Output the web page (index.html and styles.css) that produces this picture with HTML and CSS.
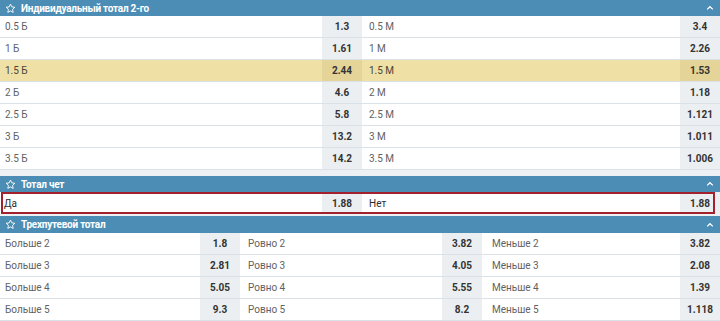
FILE: index.html
```html
<!DOCTYPE html>
<html lang="ru">
<head>
<meta charset="utf-8">
<link rel="stylesheet" href="styles.css">
</head>
<body>
<div class="page">
  <section class="market">
    <div class="head">
      <svg class="star" viewBox="0 0 12 12"><path d="M6 1.2l1.45 3.05 3.3.4-2.45 2.3.63 3.3L6 8.65 3.07 10.25l.63-3.3L1.25 4.65l3.3-.4z" fill="none" stroke="#fff" stroke-width="1" stroke-linejoin="round"/></svg>
      <span class="title">Индивидуальный тотал 2-го</span>
      <svg class="chev" viewBox="0 0 8 6"><path d="M1.2 4.4L4 1.7l2.8 2.7" fill="none" stroke="#fff" stroke-width="1.3"/></svg>
    </div>
    <div class="grid two">
      <div class="cell"><span class="lbl">0.5 Б</span><span class="odd">1.3</span></div>
      <div class="cell"><span class="lbl">0.5 М</span><span class="odd">3.4</span></div>
      <div class="cell"><span class="lbl">1 Б</span><span class="odd">1.61</span></div>
      <div class="cell"><span class="lbl">1 М</span><span class="odd">2.26</span></div>
      <div class="cell hl"><span class="lbl">1.5 Б</span><span class="odd">2.44</span></div>
      <div class="cell hl"><span class="lbl">1.5 М</span><span class="odd">1.53</span></div>
      <div class="cell"><span class="lbl">2 Б</span><span class="odd">4.6</span></div>
      <div class="cell"><span class="lbl">2 М</span><span class="odd">1.18</span></div>
      <div class="cell"><span class="lbl">2.5 Б</span><span class="odd">5.8</span></div>
      <div class="cell"><span class="lbl">2.5 М</span><span class="odd">1.121</span></div>
      <div class="cell"><span class="lbl">3 Б</span><span class="odd">13.2</span></div>
      <div class="cell"><span class="lbl">3 М</span><span class="odd">1.011</span></div>
      <div class="cell"><span class="lbl">3.5 Б</span><span class="odd">14.2</span></div>
      <div class="cell"><span class="lbl">3.5 М</span><span class="odd">1.006</span></div>
    </div>
  </section>

  <section class="market market-mid">
    <div class="head">
      <svg class="star" viewBox="0 0 12 12"><path d="M6 1.2l1.45 3.05 3.3.4-2.45 2.3.63 3.3L6 8.65 3.07 10.25l.63-3.3L1.25 4.65l3.3-.4z" fill="none" stroke="#fff" stroke-width="1" stroke-linejoin="round"/></svg>
      <span class="title">Тотал чет</span>
      <svg class="chev" viewBox="0 0 8 6"><path d="M1.2 4.4L4 1.7l2.8 2.7" fill="none" stroke="#fff" stroke-width="1.3"/></svg>
    </div>
    <div class="grid two marked">
      <div class="cell"><span class="lbl dark">Да</span><span class="odd">1.88</span></div>
      <div class="cell"><span class="lbl dark">Нет</span><span class="odd">1.88</span></div>
    </div>
  </section>

  <section class="market market-last">
    <div class="head">
      <svg class="star" viewBox="0 0 12 12"><path d="M6 1.2l1.45 3.05 3.3.4-2.45 2.3.63 3.3L6 8.65 3.07 10.25l.63-3.3L1.25 4.65l3.3-.4z" fill="none" stroke="#fff" stroke-width="1" stroke-linejoin="round"/></svg>
      <span class="title">Трехпутевой тотал</span>
      <svg class="chev" viewBox="0 0 8 6"><path d="M1.2 4.4L4 1.7l2.8 2.7" fill="none" stroke="#fff" stroke-width="1.3"/></svg>
    </div>
    <div class="grid three">
      <div class="cell"><span class="lbl">Больше 2</span><span class="odd">1.8</span></div>
      <div class="cell"><span class="lbl">Ровно 2</span><span class="odd">3.82</span></div>
      <div class="cell"><span class="lbl">Меньше 2</span><span class="odd">3.82</span></div>
      <div class="cell"><span class="lbl">Больше 3</span><span class="odd">2.81</span></div>
      <div class="cell"><span class="lbl">Ровно 3</span><span class="odd">4.05</span></div>
      <div class="cell"><span class="lbl">Меньше 3</span><span class="odd">2.08</span></div>
      <div class="cell"><span class="lbl">Больше 4</span><span class="odd">5.05</span></div>
      <div class="cell"><span class="lbl">Ровно 4</span><span class="odd">5.55</span></div>
      <div class="cell"><span class="lbl">Меньше 4</span><span class="odd">1.39</span></div>
      <div class="cell"><span class="lbl">Больше 5</span><span class="odd">9.3</span></div>
      <div class="cell"><span class="lbl">Ровно 5</span><span class="odd">8.2</span></div>
      <div class="cell"><span class="lbl">Меньше 5</span><span class="odd">1.118</span></div>
    </div>
  </section>
</div>
</body>
</html>
```

FILE: styles.css
```css
* { box-sizing: border-box; }
html, body {
  margin: 0;
  padding: 0;
  background: #eef1f3;
  font-family: Roboto, "Liberation Sans", Arial, sans-serif;
  font-size: 10px;
  overflow: hidden;
}
.page {
  width: 720px;
  height: 321px;
  display: flex;
  flex-direction: column;
}
.market { margin-bottom: 6px; }
.market-mid { margin-bottom: 2px; }
.market-last { margin-bottom: 0; }

.head {
  height: 16px;
  background: #4b8db5;
  display: flex;
  align-items: center;
  padding: 0 6px 0 5px;
  color: #fff;
}
.market-last .head { height: 17px; }
.star { width: 11px; height: 11px; margin-right: 5px; flex: none; }
.title { font-weight: 700; font-size: 10px; flex: 1; letter-spacing: -0.25px; }
.chev { width: 8px; height: 6px; flex: none; }

.grid { display: grid; background: #fff; }
.two { grid-template-columns: 362fr 358fr; }
.three { grid-template-columns: 240px 242px 238px; }

.cell {
  display: flex;
  height: 22px;
  border-bottom: 1px solid #dbe2e7;
  background: #fff;
}
.lbl {
  flex: 1;
  display: flex;
  align-items: center;
  padding-left: 5px;
  color: #5f6264;
}
.two .cell:nth-child(even) .lbl { padding-left: 7px; }
.three .cell:nth-child(3n+1) .lbl { padding-left: 5px; }
.three .cell:nth-child(3n+2) .lbl { padding-left: 8px; }
.three .cell:nth-child(3n) .lbl { padding-left: 10px; }
.two .cell .lbl.dark { color: #2c2c2c; padding-left: 4px; }
.two .cell:nth-child(even) .lbl.dark { padding-left: 7px; }
.odd {
  width: 40px;
  flex: none;
  display: flex;
  align-items: center;
  justify-content: center;
  background: #eceff1;
  font-weight: 700;
  color: #333;
}
.hl { background: #efe0a6; }
.hl .odd { background: #e4d497; }
.hl .lbl { color: #4a4636; }

.marked { position: relative; }
.marked .cell { height: 22px; border-bottom: none; }
.marked::after {
  content: "";
  position: absolute;
  left: 1px;
  right: 5px;
  top: 0;
  bottom: 0;
  border: 2px solid #a3202d;
  pointer-events: none;
}
```
